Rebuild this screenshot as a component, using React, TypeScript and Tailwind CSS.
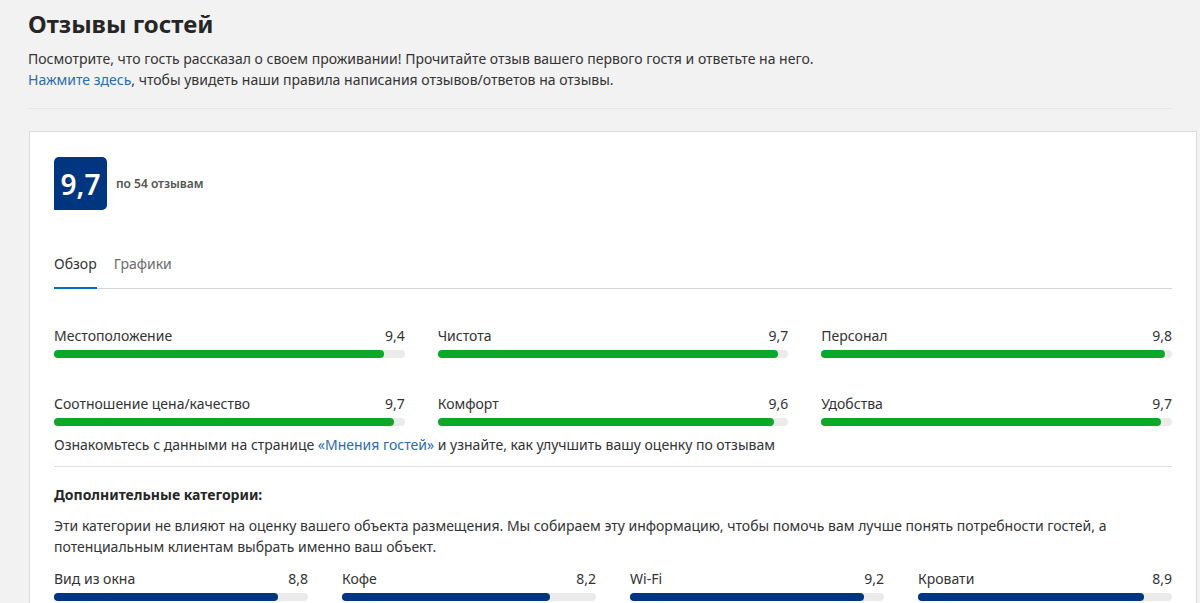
import React from "react";

const main = [
  { label: "Местоположение", score: "9,4", v: 9.4 },
  { label: "Чистота", score: "9,7", v: 9.7 },
  { label: "Персонал", score: "9,8", v: 9.8 },
  { label: "Соотношение цена/качество", score: "9,7", v: 9.7 },
  { label: "Комфорт", score: "9,6", v: 9.6 },
  { label: "Удобства", score: "9,7", v: 9.7 },
];

const extra = [
  { label: "Вид из окна", score: "8,8", v: 8.8 },
  { label: "Кофе", score: "8,2", v: 8.2 },
  { label: "Wi-Fi", score: "9,2", v: 9.2 },
  { label: "Кровати", score: "8,9", v: 8.9 },
];

function Bar({ label, score, v, color }: { label: string; score: string; v: number; color: string }) {
  return (
    <div>
      <div className="flex justify-between text-[14px] leading-[20px] text-[#333]">
        <span>{label}</span>
        <span>{score}</span>
      </div>
      <div className="mt-[4px] h-[8px] rounded-full bg-[#ebebeb]">
        <div className={`h-full rounded-full ${color}`} style={{ width: `${v * 10}%` }} />
      </div>
    </div>
  );
}

export default function App() {
  return (
    <div className="min-h-[603px] bg-[#f2f2f2] font-['Noto_Sans',sans-serif] text-[#333]">
      <div className="px-[28px] pt-[6px]">
        <h1 className="text-[24px] font-bold leading-[36px] text-[#262626]">Отзывы гостей</h1>
        <p className="mt-[6px] text-[14px] leading-[21px]">
          Посмотрите, что гость рассказал о своем проживании! Прочитайте отзыв вашего первого гостя и ответьте на него.
          <br />
          <a className="text-[#2b6cb0]">Нажмите здесь</a>, чтобы увидеть наши правила написания отзывов/ответов на отзывы.
        </p>
        <div className="mt-[18px] border-t border-[#e8e8e8]" />
      </div>
      <div className="ml-[29px] mr-[3px] mt-[22px] border border-[#dcdcdc] bg-white px-[24px] pt-[25px] pb-[20px]">
        <div className="flex items-center gap-[9px]">
          <div className="flex h-[53px] w-[53px] items-center justify-center rounded-[5px] rounded-bl-none bg-[#003580] text-[28px] font-semibold text-white">
            9,7
          </div>
          <span className="text-[12px] font-semibold text-[#555]">по 54 отзывам</span>
        </div>
        <div className="mt-[44px] flex border-b border-[#d4d4d4] text-[14px] leading-[20px]">
          <div className="-mb-px border-b-2 border-[#0071c2] pb-[13px] text-[#333]">Обзор</div>
          <div className="ml-[17px] pb-[13px] text-[#6b6b6b]">Графики</div>
        </div>
        <div className="mt-[37px] grid grid-cols-3 gap-x-[33px] gap-y-[36px]">
          {main.map((m) => (
            <Bar key={m.label} {...m} color="bg-[#0ca82a]" />
          ))}
        </div>
        <p className="mt-[8px] text-[14px] leading-[22px]">
          Ознакомьтесь с данными на странице <a className="text-[#2b6cb0]">«Мнения гостей»</a> и узнайте, как улучшить вашу оценку по отзывам
        </p>
        <div className="mt-[10px] border-t border-[#dedede]" />
        <h2 className="mt-[18px] text-[14px] font-bold leading-[20px] text-[#262626]">Дополнительные категории:</h2>
        <p className="mt-[10px] text-[14px] leading-[21px]">
          Эти категории не влияют на оценку вашего объекта размещения. Мы собираем эту информацию, чтобы помочь вам лучше понять потребности гостей, а<br />
          потенциальным клиентам выбрать именно ваш объект.
        </p>
        <div className="mt-[12px] grid grid-cols-4 gap-x-[34px]">
          {extra.map((m) => (
            <Bar key={m.label} {...m} color="bg-[#003580]" />
          ))}
        </div>
      </div>
    </div>
  );
}
